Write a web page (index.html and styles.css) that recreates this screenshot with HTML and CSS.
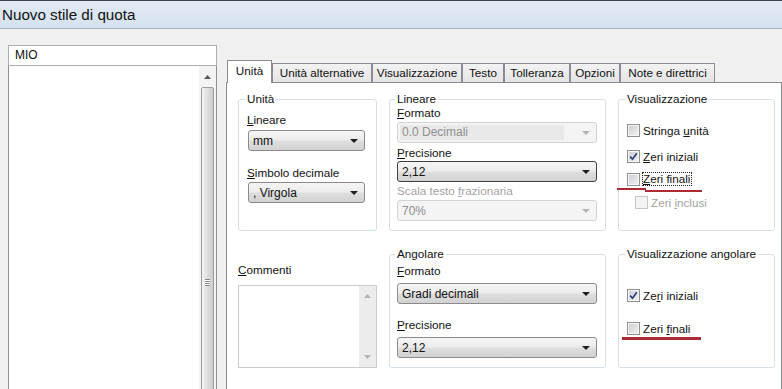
FILE: index.html
```html
<!DOCTYPE html>
<html lang="it">
<head>
	<meta charset="UTF-8">
	<title>Nuovo stile di quota</title>
	<link rel="stylesheet" href="styles.css">
</head>
<body>
	<div class="titlebar">Nuovo stile di quota</div>

	<div class="main">
		<!-- elenco stili -->
		<div class="styles-col">
			<div class="name-box">MIO</div>
			<div class="list-box">
				<div class="list-area"></div>
				<div class="vscroll">
					<div class="sc-btn">
						<svg width="7" height="4" viewBox="0 0 7 4"><polygon points="0,4 7,4 3.5,0" fill="#555"/></svg>
					</div>
					<div class="sc-thumb">
						<span class="grip"></span>
					</div>
				</div>
			</div>
		</div>

		<!-- schede -->
		<div class="tabs-col">
			<div class="tab-strip">
				<div class="tab active t-unit">Unità</div>
				<div class="tab t-alt">Unità alternative</div>
				<div class="tab t-vis">Visualizzazione</div>
				<div class="tab t-txt">Testo</div>
				<div class="tab t-tol">Tolleranza</div>
				<div class="tab t-opt">Opzioni</div>
				<div class="tab t-note">Note e direttrici</div>
			</div>

			<div class="tab-panel">
				<div class="groups">
					<fieldset class="group g-unit">
						<legend>Unità</legend>
						<div class="lbl l-first"><u>L</u>ineare</div>
						<div class="combo c-small c-after-first"><span class="val">mm</span><span class="arrow"></span></div>
						<div class="lbl l-second"><u>S</u>imbolo decimale</div>
						<div class="combo c-small c-after-second"><span class="val">, Virgola</span><span class="arrow"></span></div>
					</fieldset>

					<fieldset class="group g-lin">
						<legend>Lineare</legend>
						<div class="lbl"><u>F</u>ormato</div>
						<div class="combo c-wide disabled shade m2"><span class="val">0.0 Decimali</span><span class="arrow"></span></div>
						<div class="lbl m3"><u>P</u>recisione</div>
						<div class="combo c-wide focus m1"><span class="val">2,12</span><span class="arrow"></span></div>
						<div class="lbl off m2">Scala testo <u>f</u>razionaria</div>
						<div class="combo c-wide disabled m2"><span class="val">70%</span><span class="arrow"></span></div>
					</fieldset>

					<fieldset class="group g-vis col3">
						<legend>Visualizzazione</legend>
						<div class="chk r1"><span class="cb"></span><span>Stringa <u>u</u>nità</span></div>
						<div class="chk r2"><span class="cb on"><svg width="9" height="9" viewBox="0 0 9 9"><path d="M1.2 4.6 L3.5 7.2 L7.8 1.2" fill="none" stroke="#2b3f7c" stroke-width="1.7"/></svg></span><span><u>Z</u>eri iniziali</span></div>
						<div class="chk r3 mark-a"><span class="cb"></span><span class="focus-rect"><u>Z</u>eri finali</span></div>
						<div class="chk r4 off"><span class="cb dis"></span><span>Zeri <u>i</u>nclusi</span></div>
					</fieldset>

					<div class="comments">
						<div class="lbl"><u>C</u>ommenti</div>
						<div class="memo">
							<div class="memo-area"></div>
							<div class="memo-scroll">
								<svg width="7" height="4" viewBox="0 0 7 4"><polygon points="0,4 7,4 3.5,0" fill="#b4b4b4"/></svg>
								<svg width="7" height="4" viewBox="0 0 7 4"><polygon points="0,0 7,0 3.5,4" fill="#b4b4b4"/></svg>
							</div>
						</div>
					</div>

					<fieldset class="group g-ang">
						<legend>Angolare</legend>
						<div class="lbl m3"><u>F</u>ormato</div>
						<div class="combo c-wide m5"><span class="val">Gradi decimali</span><span class="arrow"></span></div>
						<div class="lbl m14"><u>P</u>recisione</div>
						<div class="combo c-wide m5"><span class="val">2,12</span><span class="arrow"></span></div>
					</fieldset>

					<fieldset class="group g-visang col3">
						<legend>Visualizzazione angolare</legend>
						<div class="chk ra1"><span class="cb on"><svg width="9" height="9" viewBox="0 0 9 9"><path d="M1.2 4.6 L3.5 7.2 L7.8 1.2" fill="none" stroke="#2b3f7c" stroke-width="1.7"/></svg></span><span>Ze<u>r</u>i iniziali</span></div>
						<div class="chk ra2 mark-b"><span class="cb"></span><span>Zeri <u>f</u>inali</span></div>
					</fieldset>
				</div>
			</div>
		</div>
	</div>
</body>
</html>
```

FILE: styles.css
```css
html, body{
	margin:0;
	height:389px;
	overflow:hidden;
}
body{
	background:#f0f0f0;
	font-family:"Liberation Sans", Arial, sans-serif;
	font-size:11.7px;
	color:#111;
}

/* barra del titolo */
.titlebar{
	height:27px;
	border-top:1px solid #3d4552;
	border-bottom:1px solid #a7b2c0;
	background:linear-gradient(#e1eaf5, #d6e2f0);
	font-size:15.2px;
	line-height:27px;
	padding-left:2px;
}

.main{
	display:flex;
	padding:16px 0 0 8px;
}

/* colonna sinistra */
.styles-col{
	width:209px;
	flex:none;
}
.name-box{
	height:19px;
	border:1px solid #abadb3;
	background:#fff;
	padding-left:6px;
	line-height:19px;
	font-size:12px;
}
.list-box{
	display:flex;
	height:340px;
	border:1px solid #8c9097;
	border-top:none;
	background:#fff;
}
.list-area{ flex:1; }
.vscroll{
	width:17px;
	background:#f3f3f3;
	display:flex;
	flex-direction:column;
	align-items:center;
}
.sc-btn{
	height:17px;
	width:100%;
	display:flex;
	align-items:center;
	justify-content:center;
	margin-top:2px;
}
.sc-thumb{
	margin-top:2px;
	width:13px;
	flex:1;
	box-sizing:border-box;
	border:1px solid #9c9c9c;
	border-radius:2px;
	background:linear-gradient(to right, #f4f4f4, #dadada 60%, #cdcdcd);
	display:flex;
	justify-content:center;
	padding-top:191px;
}
.grip{
	width:5px;
	height:5px;
	border-top:1px solid #888;
	border-bottom:1px solid #888;
	background:linear-gradient(#fff 0 1px, #888 1px 2px, #fff 2px 3px, #888 3px 4px, #fff 4px);
}

/* schede */
.tabs-col{
	margin-left:9px;
	margin-top:15px;
	flex:1;
}
.tab-strip{
	display:flex;
	align-items:flex-end;
	height:23px;
	padding-left:1px;
	margin-bottom:-1px;
	position:relative;
	z-index:1;
}
.tab{
	box-sizing:border-box;
	height:19px;
	line-height:17px;
	margin-bottom:1px;
	border:1px solid #898c95;
	border-bottom:none;
	background:linear-gradient(#f3f3f3, #e4e4e4);
	white-space:nowrap;
	text-align:center;
}
.tab.active{
	height:23px;
	line-height:20px;
	margin-bottom:0;
	background:#fff;
}
.t-unit{ width:45px; }
.t-alt{ width:100px; }
.t-vis{ width:90px; }
.t-txt{ width:42px; }
.t-tol{ width:66px; }
.t-opt{ width:50px; }
.t-note{ width:95px; }

.tab-panel{
	height:310px;
	border:1px solid #898c95;
	background:#fff;
	padding:9px 0 0 11px;
}

.groups{
	display:grid;
	grid-template-columns:139px 217px 157px;
	grid-template-rows:139px 121px;
	column-gap:12px;
	row-gap:16px;
}
.col3{
	margin-left:-1px;
	width:157px;
	justify-self:start;
}

.group{
	margin:0;
	padding:0 8px;
	border:1px solid #d5dfe5;
	border-radius:3px;
	box-sizing:border-box;
	min-width:0;
}
.group legend{
	padding:0 2px;
	margin-left:-2px;
	line-height:14px;
}
.g-lin, .g-ang{
	padding:0 7px;
}

.lbl{
	line-height:14px;
	white-space:nowrap;
}
.lbl.off{ color:#a2a2a2; }
.l-first{ margin-top:7px; }
.l-second{ margin-top:15px; }
.c-after-first{ margin-top:3px; }
.c-after-second{ margin-top:2px; }
.m1{ margin-top:1px; }
.m2{ margin-top:2px; }
.m3{ margin-top:3px; }
.m5{ margin-top:5px; }
.m14{ margin-top:14px; }

/* caselle combinate */
.combo{
	display:flex;
	align-items:center;
	height:21px;
	box-sizing:border-box;
	border:1px solid #8b8b8b;
	border-radius:3px;
	background:linear-gradient(#f5f5f5 0%, #ececec 48%, #dedede 52%, #d2d2d2 100%);
	padding-left:4px;
	font-size:12px;
}
.c-small{ width:117px; margin-left:1px; }
.c-wide{ width:200px; }
.combo .val{ flex:1; }
.combo .arrow{
	width:0;
	height:0;
	border-left:4px solid transparent;
	border-right:4px solid transparent;
	border-top:4px solid #1e1e1e;
	margin-right:6px;
}
.combo.focus{ border-color:#3e3e3e; }
.combo.disabled{
	background:#f4f4f4;
	border-color:#d3d3d3;
	color:#8f8f8f;
}
.combo.disabled .arrow{ border-top-color:#b4b4b4; }
.combo.shade .val{
	background:#e9e9e9;
	height:15px;
	line-height:15px;
	margin:0 18px 0 -2px;
	padding-left:2px;
}

/* caselle di controllo */
.chk{
	display:flex;
	align-items:center;
	height:14px;
	white-space:nowrap;
	position:relative;
}
.chk.off{ color:#a2a2a2; }
.r1{ margin-top:17px; }
.r2{ margin-top:12px; }
.r3{ margin-top:9px; }
.r4{ margin-top:9px; margin-left:8px; }
.ra1{ margin-top:27px; }
.ra2{ margin-top:19px; }

.cb{
	width:13px;
	height:13px;
	box-sizing:border-box;
	flex:none;
	border:1px solid #8e8f8f;
	box-shadow:inset 0 0 0 1px #f7f7f7;
	background:linear-gradient(135deg, #c9ccd1, #f3f3f4);
	margin-right:3px;
	display:flex;
	align-items:center;
	justify-content:center;
}
.cb.dis{
	border-color:#c6c6c6;
	background:#f4f4f4;
	box-shadow:none;
}
.focus-rect{
	outline:1px dotted #222;
	outline-offset:0;
	padding:0 1px 0 0;
	line-height:12px;
}

/* segni rossi */
.mark-a::before,
.mark-a::after,
.mark-b::after{
	content:"";
	position:absolute;
	background:#ac2a33;
}
.mark-a::before{
	left:-10px;
	top:16px;
	width:29px;
	height:2px;
}
.mark-a::after{
	left:18px;
	top:18px;
	width:57px;
	height:2px;
}
.mark-b::after{
	left:-5px;
	top:16px;
	width:79px;
	height:3px;
}

/* commenti */
.comments{
	padding-top:16px;
}
.memo{
	margin-top:8px;
	height:83px;
	box-sizing:border-box;
	border:1px solid #c9cbd0;
	display:flex;
}
.memo-area{ flex:1; }
.memo-scroll{
	width:17px;
	background:#ececec;
	display:flex;
	flex-direction:column;
	align-items:center;
	justify-content:space-between;
	padding:8px 0 8px;
}
```
